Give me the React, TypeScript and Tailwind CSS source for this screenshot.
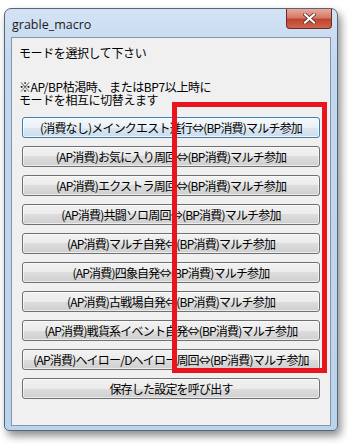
const modes = [
  "(消費なし)メインクエスト進行⇔(BP消費)マルチ参加",
  "(AP消費)お気に入り周回⇔(BP消費)マルチ参加",
  "(AP消費)エクストラ周回⇔(BP消費)マルチ参加",
  "(AP消費)共闘ソロ周回⇔(BP消費)マルチ参加",
  "(AP消費)マルチ自発⇔(BP消費)マルチ参加",
  "(AP消費)四象自発⇔(BP消費)マルチ参加",
  "(AP消費)古戦場自発⇔(BP消費)マルチ参加",
  "(AP消費)戦貨系イベント自発⇔(BP消費)マルチ参加",
  "(AP消費)ヘイロー/Dヘイロー周回⇔(BP消費)マルチ参加",
  "保存した設定を呼び出す",
];

const uiFont = { fontFamily: "'Noto Sans CJK JP', 'Noto Sans', sans-serif" };

function WinButton({ label, focused }: { label: string; focused?: boolean }) {
  return (
    <button
      style={uiFont}
      className={
        focused
          ? "h-[21px] w-full rounded-[3px] border border-[#3c7fb1] bg-[linear-gradient(#f3f8fc_0%,#e9f1f8_50%,#dbe6f0_50%,#cfdce8_100%)] text-[12px] leading-none tracking-[-0.8px] text-black shadow-[inset_0_0_0_1px_rgba(255,255,255,0.7)]"
          : "h-[21px] w-full rounded-[3px] border border-[#707070] bg-[linear-gradient(#f2f2f2_0%,#ebebeb_50%,#dddddd_50%,#cfcfcf_100%)] text-[12px] leading-none tracking-[-0.8px] text-black shadow-[inset_0_0_0_1px_rgba(255,255,255,0.6)]"
      }
    >
      {label}
    </button>
  );
}

export default function App() {
  return (
    <main className="relative h-[444px] w-[348px] overflow-hidden bg-white pl-[4px] pt-[8px]">
      <div className="relative flex h-[423px] w-[334px] flex-col rounded-t-[7px] rounded-b-[5px] border border-[#56667a] bg-[linear-gradient(#d3e3f4_0%,#c2d8ef_12%,#bcd3ec_100%)] shadow-[3px_5px_9px_rgba(0,0,0,0.45)]">
        <div className="flex h-[28px] items-center pl-[7px] pt-[5px]">
          <span
            style={{ fontFamily: "'Open Sans', 'Noto Sans', sans-serif" }}
            className="text-[12.5px] text-[#1b1b1b]"
          >
            grable_macro
          </span>
        </div>

        <div className="absolute right-[5px] top-0 flex h-[20px] w-[46px] items-center justify-center rounded-b-[4px] border border-t-0 border-[#6b2a24] bg-[linear-gradient(#e9a999_0%,#d67a68_45%,#c0442e_55%,#d2654d_100%)]">
          <svg width="13" height="11" viewBox="0 0 13 11">
            <path
              d="M2 1.5 L11 9.5 M11 1.5 L2 9.5"
              stroke="#4a2a26"
              strokeWidth="3.6"
              strokeLinecap="square"
            />
            <path
              d="M2 1.5 L11 9.5 M11 1.5 L2 9.5"
              stroke="#ffffff"
              strokeWidth="2.2"
              strokeLinecap="square"
            />
          </svg>
        </div>

        <div className="mx-[6px] mb-[4px] flex flex-1 flex-col border border-[#8496ab] bg-[#f0f0f0] px-[7px] pt-[8px]">
          <p style={uiFont} className="text-[12px] leading-[13px] tracking-[-0.4px] text-black">
            モードを選択して下さい
          </p>
          <p style={uiFont} className="mt-[21px] text-[12px] leading-[13px] tracking-[-0.4px] text-black">
            ※AP/BP枯渇時、またはBP7以上時に
            <br />
            モードを相互に切替えます
          </p>

          <div className="mt-[11px] flex flex-col gap-[8px] px-[3px]">
            {modes.map((m, i) => (
              <WinButton key={m} label={m} focused={i === 0} />
            ))}
          </div>
        </div>
      </div>

      <div className="absolute left-[172px] top-[102px] h-[271px] w-[155px] border-[5px] border-[#e8141e]" />
    </main>
  );
}
